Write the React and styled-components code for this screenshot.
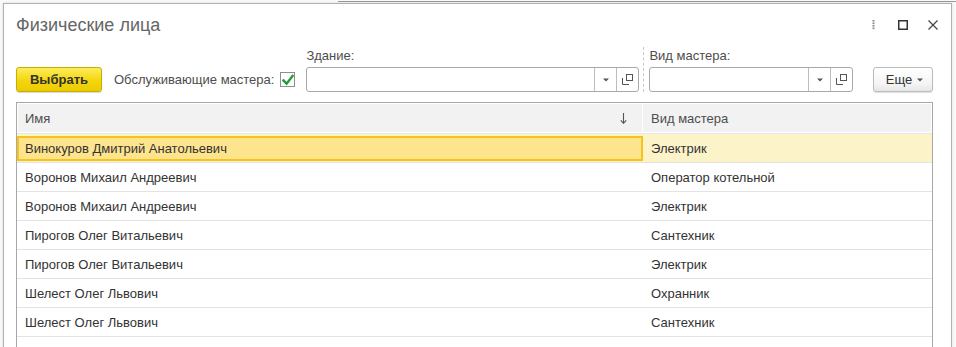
import styled, { createGlobalStyle } from 'styled-components';

const GlobalStyle = createGlobalStyle`
  html, body {
    margin: 0;
    padding: 0;
  }
  body {
    font-family: Arial, 'Liberation Sans', sans-serif;
    background: #fff;
  }
`;

const rows = [
  { name: 'Винокуров Дмитрий Анатольевич', kind: 'Электрик', current: true },
  { name: 'Воронов Михаил Андреевич', kind: 'Оператор котельной' },
  { name: 'Воронов Михаил Андреевич', kind: 'Электрик' },
  { name: 'Пирогов Олег Витальевич', kind: 'Сантехник' },
  { name: 'Пирогов Олег Витальевич', kind: 'Электрик' },
  { name: 'Шелест Олег Львович', kind: 'Охранник' },
  { name: 'Шелест Олег Львович', kind: 'Сантехник' },
  { name: '', kind: '' },
];

const DotsIcon = () => (
  <svg width="3" height="10" viewBox="0 0 3 10">
    {[0, 2.5, 5, 7.5].map((y) => (
      <rect key={y} x="0.5" y={y} width="2" height="1.6" fill="#8a8a8a" />
    ))}
  </svg>
);

const SquareIcon = () => (
  <svg width="10" height="10" viewBox="0 0 10 10">
    <rect x="0.75" y="0.75" width="8.5" height="8.5" fill="none" stroke="#333" strokeWidth="1.5" />
  </svg>
);

const CloseIcon = () => (
  <svg width="10" height="10" viewBox="0 0 10 10">
    <path d="M0.5 0.5 L9.5 9.5 M9.5 0.5 L0.5 9.5" stroke="#444" strokeWidth="1.2" />
  </svg>
);

const CaretIcon = () => (
  <svg width="6" height="4" viewBox="0 0 6 4">
    <path d="M0 0.5 H6 L3 3.5 Z" fill="#555" />
  </svg>
);

const OpenIcon = () => (
  <svg width="11" height="11" viewBox="0 0 11 11">
    <rect x="4.5" y="0.5" width="6" height="6" fill="none" stroke="#555" />
    <path d="M0.5 4 V10.5 H7" fill="none" stroke="#555" />
  </svg>
);

const CheckIcon = () => (
  <svg width="13" height="12" viewBox="0 0 13 12">
    <path d="M1.5 6.5 L5 10 L11.5 1.5" fill="none" stroke="#1f9a3d" strokeWidth="2.6" strokeLinecap="square" />
  </svg>
);

const SortIcon = () => (
  <svg width="7" height="11" viewBox="0 0 7 11">
    <path d="M3.5 0 V10" stroke="#555" strokeWidth="1.1" />
    <path d="M0.8 7.3 L3.5 10.3 L6.2 7.3" fill="none" stroke="#555" strokeWidth="1.1" />
  </svg>
);

const Field = ({ label, width, gap }) => (
  <FieldBox $gap={gap}>
    <FieldLabel>{label}</FieldLabel>
    <InputBox $width={width}>
      <InputText />
      <InputButton>
        <CaretIcon />
      </InputButton>
      <InputButton>
        <OpenIcon />
      </InputButton>
    </InputBox>
  </FieldBox>
);

export default function App() {
  return (
    <Desktop>
      <GlobalStyle />
      <Window>
        <TitleBar>
          <Title>Физические лица</Title>
          <WindowControls>
            <IconButton>
              <DotsIcon />
            </IconButton>
            <IconButton>
              <SquareIcon />
            </IconButton>
            <IconButton>
              <CloseIcon />
            </IconButton>
          </WindowControls>
        </TitleBar>

        <Toolbar>
          <PrimaryButton>Выбрать</PrimaryButton>
          <CheckGroup>
            <CheckLabel>Обслуживающие мастера:</CheckLabel>
            <CheckBox>
              <CheckIcon />
            </CheckBox>
          </CheckGroup>
          <Field label="Здание:" width={333} gap={11} />
          <Separator />
          <Field label="Вид мастера:" width={204} gap={5} />
          <MoreButton>
            Еще
            <CaretIcon />
          </MoreButton>
        </Toolbar>

        <Table>
          <HeaderRow>
            <HeaderCell $first>
              Имя
              <SortIcon />
            </HeaderCell>
            <HeaderCell>Вид мастера</HeaderCell>
          </HeaderRow>
          {rows.map((row, i) => (
            <Row key={i} $current={row.current}>
              <Cell $first $current={row.current}>
                {row.name}
              </Cell>
              <Cell>{row.kind}</Cell>
            </Row>
          ))}
        </Table>
      </Window>
    </Desktop>
  );
}

const Desktop = styled.div`
  width: 956px;
  height: 347px;
  overflow: hidden;
  box-sizing: border-box;
  padding: 3px 0 0 3px;
  background: linear-gradient(#9a9a9a, #9a9a9a) 338px 1px / 618px 1px no-repeat, #fafafa;
`;

const Window = styled.div`
  width: 949px;
  height: 400px;
  box-sizing: border-box;
  border: 1px solid #b0b0b0;
  background: #fff;
  box-shadow: 0 0 3px rgba(0, 0, 0, 0.12);
`;

const TitleBar = styled.div`
  display: flex;
  align-items: center;
  justify-content: space-between;
  padding: 9px 3px 0 12px;
`;

const Title = styled.div`
  font-size: 18px;
  line-height: 24px;
  color: #666;
`;

const WindowControls = styled.div`
  display: flex;
  align-items: center;
`;

const IconButton = styled.div`
  width: 30px;
  height: 24px;
  display: flex;
  align-items: center;
  justify-content: center;
`;

const Toolbar = styled.div`
  display: flex;
  align-items: flex-end;
  margin-top: 11px;
  padding: 0 18px 0 12px;
`;

const PrimaryButton = styled.div`
  box-sizing: border-box;
  width: 86px;
  height: 25px;
  display: flex;
  align-items: center;
  justify-content: center;
  border: 1px solid #c7ad00;
  border-radius: 3px;
  background: linear-gradient(#fcec5c, #f4d60e 55%, #eccb00);
  box-shadow: 0 1px 1px rgba(0, 0, 0, 0.15);
  font-size: 13px;
  font-weight: bold;
  color: #333;
`;

const CheckGroup = styled.div`
  display: flex;
  align-items: center;
  height: 25px;
  margin-left: 12px;
  gap: 6px;
`;

const CheckLabel = styled.span`
  font-size: 13px;
  color: #4d4d4d;
`;

const CheckBox = styled.div`
  box-sizing: border-box;
  width: 15px;
  height: 15px;
  border: 1px solid #8f8f8f;
  background: #fff;
  display: flex;
  align-items: center;
  justify-content: center;
  padding-left: 1px;
`;

const FieldBox = styled.div`
  display: flex;
  flex-direction: column;
  margin-left: ${(p) => p.$gap}px;
`;

const FieldLabel = styled.div`
  font-size: 13px;
  line-height: 15px;
  color: #4d4d4d;
  margin-bottom: 4px;
`;

const InputBox = styled.div`
  box-sizing: border-box;
  width: ${(p) => p.$width}px;
  height: 25px;
  display: flex;
  border: 1px solid #a9a9a9;
  border-radius: 3px;
  background: #fff;
`;

const InputText = styled.div`
  flex: 1;
`;

const InputButton = styled.div`
  width: 21px;
  display: flex;
  align-items: center;
  justify-content: center;
  border-left: 1px solid #bdbdbd;
`;

const Separator = styled.div`
  align-self: stretch;
  margin: -1px 0 0 4px;
  border-left: 1px dashed #c8c8c8;
`;

const MoreButton = styled.div`
  box-sizing: border-box;
  width: 60px;
  height: 25px;
  margin-left: auto;
  display: flex;
  align-items: center;
  justify-content: center;
  gap: 5px;
  padding-left: 3px;
  border: 1px solid #bcbcbc;
  border-radius: 3px;
  background: linear-gradient(#fff, #f4f4f4 70%, #e6e6e6);
  box-shadow: 0 1px 1px rgba(0, 0, 0, 0.12);
  font-size: 13px;
  color: #333;
`;

const Table = styled.div`
  margin: 10px 18px 0 12px;
  border: 1px solid #a8a8a8;
  border-bottom: none;
`;

const HeaderRow = styled.div`
  display: grid;
  grid-template-columns: 626px 1fr;
  height: 30px;
  border-bottom: 1px solid #e6e6e6;
  background: #f2f2f2;
  box-shadow: inset 0 0 0 1px #fff;
`;

const HeaderCell = styled.div`
  display: flex;
  align-items: center;
  justify-content: space-between;
  padding: 0 15px 0 8px;
  font-size: 13px;
  color: #4d4d4d;
  border-right: ${(p) => (p.$first ? '1px solid #fff' : 'none')};
`;

const Row = styled.div`
  display: grid;
  grid-template-columns: 626px 1fr;
  height: 29px;
  box-sizing: border-box;
  border-bottom: 1px solid #e3e3e3;
  background: ${(p) => (p.$current ? '#fdf3c9' : '#fff')};
  padding-top: 1px;
`;

const Cell = styled.div`
  display: flex;
  align-items: center;
  padding-left: 8px;
  font-size: 13px;
  color: #333;
  white-space: nowrap;
  ${(p) =>
    p.$current &&
    `
    background: #fde48d;
    box-shadow: inset 0 0 0 2px #f6c31c;
    margin: 1px 0 1px 0;
  `}
`;
